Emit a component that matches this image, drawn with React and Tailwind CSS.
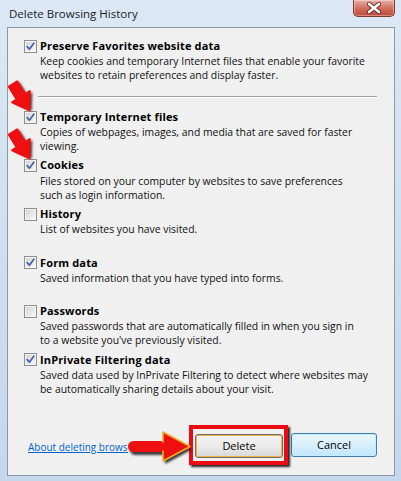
import React from "react";

const items = [
  { label: "Temporary Internet files", checked: true, desc: ["Copies of webpages, images, and media that are saved for faster", "viewing."] },
  { label: "Cookies", checked: true, desc: ["Files stored on your computer by websites to save preferences", "such as login information."] },
  { label: "History", checked: false, desc: ["List of websites you have visited."] },
  { label: "Form data", checked: true, desc: ["Saved information that you have typed into forms."] },
  { label: "Passwords", checked: false, desc: ["Saved passwords that are automatically filled in when you sign in", "to a website you've previously visited."] },
  { label: "InPrivate Filtering data", checked: true, desc: ["Saved data used by InPrivate Filtering to detect where websites may", "be automatically sharing details about your visit."] },
];

function Checkbox({ checked }) {
  return (
    <div className="w-[13px] h-[13px] shrink-0 border border-[#8f8f8f] bg-[#f4f4f4] p-px">
      <div className="w-full h-full bg-gradient-to-br from-[#d6d6d6] to-[#f6f6f6] flex items-center justify-center">
        {checked && (
          <svg width="9" height="9" viewBox="0 0 9 9">
            <path d="M1.2 4.6 L3.4 7.2 L7.8 1.2" fill="none" stroke="#4660a6" strokeWidth="1.7" strokeLinecap="round" strokeLinejoin="round" />
          </svg>
        )}
      </div>
    </div>
  );
}

function Label({ children }) {
  return (
    <span className="font-bold text-[11px] tracking-[0.15px] text-black whitespace-nowrap">{children}</span>
  );
}

function Item({ label, checked, desc }) {
  return (
    <div className="flex flex-col">
      <div className="h-[16px] flex items-center gap-[3px]">
        <Checkbox checked={checked} />
        <Label>{label}</Label>
      </div>
      <div className="pl-[16px] h-[28px] text-[10.4px] leading-[14px] text-[#111]">
        {desc.map((d, i) => (
          <div key={i} className="whitespace-nowrap">{d}</div>
        ))}
      </div>
    </div>
  );
}

function DiagArrow({ top }) {
  return (
    <svg className="absolute left-0" style={{ top }} width="42" height="46" viewBox="0 0 42 46">
      <defs>
        <filter id={"b" + top} x="-30%" y="-30%" width="160%" height="160%">
          <feGaussianBlur stdDeviation="1" />
        </filter>
      </defs>
      <g transform="translate(13,12) rotate(58)">
        <path d="M0,-5 L15,-5 L15,-10.5 L31,0 L15,10.5 L15,5 L0,5 Z" transform="translate(2,-1.5)" fill="#000" opacity="0.75" filter={"url(#b" + top + ")"} strokeLinejoin="round" />
        <path d="M0,-5 L15,-5 L15,-10.5 L31,0 L15,10.5 L15,5 L0,5 Z" fill="#ee1010" stroke="#ee1010" strokeWidth="2" strokeLinejoin="round" />
      </g>
    </svg>
  );
}

export default function App() {
  return (
    <div className="w-[401px] h-[481px] relative flex flex-col bg-gradient-to-b from-[#dce8f5] via-[#cfdfef] to-[#c4d7ec] font-['Open_Sans','Noto_Sans',sans-serif] overflow-hidden">
      {/* title bar */}
      <div className="h-[27px] flex items-start justify-between pl-[9px] shrink-0">
        <span className="text-[11.5px] mt-[5px] text-[#1c1c24] whitespace-nowrap">Delete Browsing History</span>
        <div className="mr-[6px] w-[42px] h-[17px] rounded-b-[5px] border border-t-0 border-[#7a3a30] bg-gradient-to-b from-[#e9b0a6] via-[#d36f60] to-[#c0473a] flex items-center justify-center shadow-[inset_0_0_0_1px_rgba(255,255,255,0.35)]">
          <svg width="16" height="12" viewBox="0 0 16 12">
            <path d="M3 2 L13 10 M13 2 L3 10" stroke="#5a2a24" strokeWidth="4.2" strokeLinecap="round" />
            <path d="M3 2 L13 10 M13 2 L3 10" stroke="#ffffff" strokeWidth="2.6" strokeLinecap="round" />
          </svg>
        </div>
      </div>

      {/* panel */}
      <div className="flex-1 ml-[7px] mr-[6px] mb-[5px] border border-[#8d99a8] bg-[#f0f0f0] flex flex-col pl-[16px] pt-[10px]">
        <div className="flex flex-col">
          <div className="h-[16px] flex items-center gap-[3px]">
            <Checkbox checked />
            <Label>Preserve Favorites website data</Label>
          </div>
          <div className="pl-[16px] text-[10.4px] leading-[14px] text-[#111]">
            <div className="whitespace-nowrap">Keep cookies and temporary Internet files that enable your favorite</div>
            <div className="whitespace-nowrap">websites to retain preferences and display faster.</div>
          </div>
        </div>

        <div className="mt-[14px] ml-[14px] w-[339px] h-[2px] border-t border-[#a0a0a0] border-b border-b-white" />

        <div className="mt-[11px] flex flex-col gap-[4.6px]">
          {items.map((it) => (
            <Item key={it.label} {...it} />
          ))}
        </div>

        <div className="mt-auto mb-[17px] pr-[17px] flex items-center">
          <div className="ml-[4px] w-[100px] overflow-hidden whitespace-nowrap">
            <a className="text-[10px] text-[#0066cc] underline">About deleting browsing history</a>
          </div>
          <div className="ml-auto relative">
            <div className="absolute -left-[6px] -right-[5px] -top-[7px] -bottom-[7px] border-[4px] border-[#ec0b12] shadow-[2px_2px_2px_rgba(0,0,0,0.85)]" />
            <button className="relative w-[88px] h-[24px] rounded-[3px] border border-[#707070] bg-gradient-to-b from-[#f4f4f4] via-[#ebebeb] to-[#d9d9d9] text-[11px] text-black shadow-[inset_0_0_0_1px_#f0b040]">
              Delete
            </button>
          </div>
          <button className="ml-[8px] w-[86px] h-[24px] rounded-[3px] border border-[#3c7fb1] bg-gradient-to-b from-[#eaf6fd] via-[#d9f0fc] to-[#bee6fd] text-[11px] text-black shadow-[inset_0_0_0_1px_#c8eaff]">
            Cancel
          </button>
        </div>
      </div>

      {/* annotation arrows */}
      <DiagArrow top={72} />
      <DiagArrow top={120} />
      <svg className="absolute left-[124px] top-[428px]" width="72" height="38" viewBox="0 0 72 38">
        <defs>
          <filter id="bb" x="-30%" y="-30%" width="160%" height="160%">
            <feGaussianBlur stdDeviation="1" />
          </filter>
        </defs>
        <g transform="translate(2,3)" fill="#000" opacity="0.75" filter="url(#bb)">
          <rect x="4" y="13" width="38" height="11" rx="5.5" />
          <path d="M39,4 L66,18.5 L39,33 Z" />
        </g>
        <rect x="4" y="13" width="38" height="11" rx="5.5" fill="#ee1010" />
        <path d="M39,4 L66,18.5 L39,33 Z" fill="#ee1010" stroke="#efad2a" strokeWidth="1.6" strokeLinejoin="round" />
        <rect x="36" y="14.5" width="6" height="8" fill="#ee1010" />
      </svg>
    </div>
  );
}
